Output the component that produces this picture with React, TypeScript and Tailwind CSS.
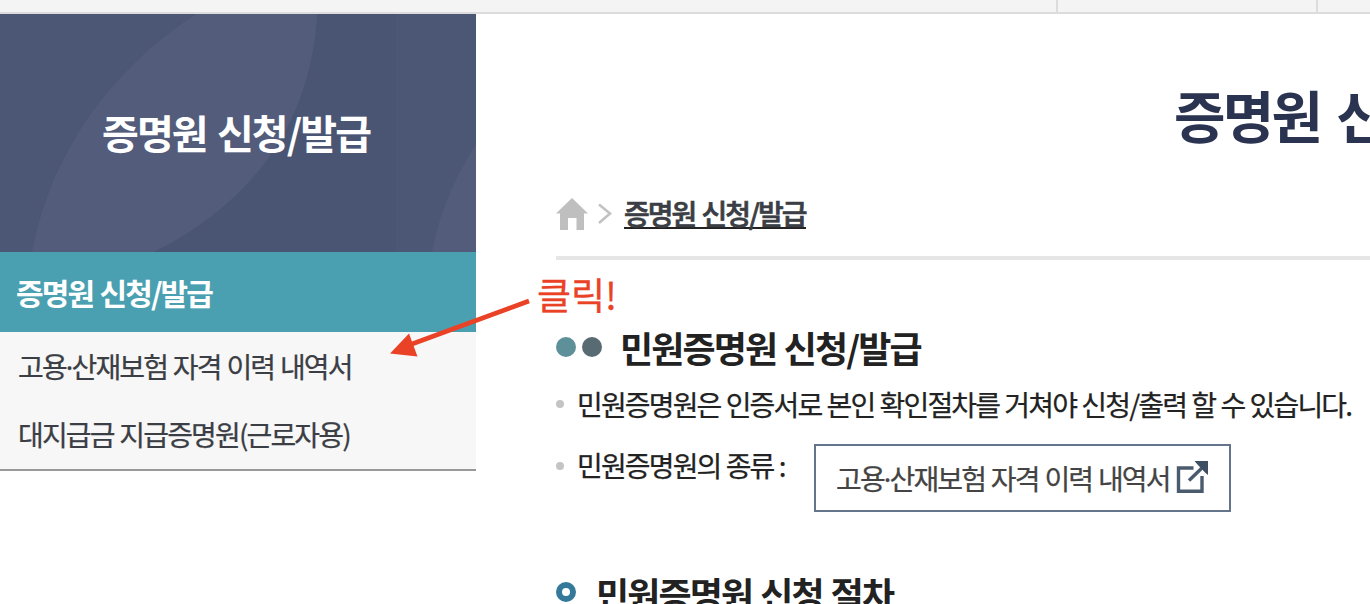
import React from "react";

function HomeIcon() {
  return (
    <svg width="32" height="32" viewBox="0 0 32 32" className="block">
      <path d="M16 0 L32 15.5 H28 V32 H20.5 V20 H12 V32 H4 V15.5 H0 Z" fill="#bfbfbf" />
    </svg>
  );
}

function ExternalIcon() {
  return (
    <svg width="34" height="34" viewBox="0 0 34 34" className="mt-[-2px] block shrink-0">
      <path d="M17.5 8 H2.5 V31.2 H26 V16" fill="none" stroke="#4b5b6e" strokeWidth="3.4" />
      <path d="M13 20.5 L28 6" fill="none" stroke="#4b5b6e" strokeWidth="3.4" />
      <path d="M18.5 1 H32 V15 L29 12.5 L21.5 4.5 Z" fill="#3e4f63" />
    </svg>
  );
}

function InsuranceLabel() {
  return (
    <>
      고용<span className="font-['Noto_Sans']">·</span>산재보험 자격 이력 내역서
    </>
  );
}

function Sidebar() {
  return (
    <aside className="w-[476px] shrink-0">
      <div className="relative h-[238px] overflow-hidden bg-[#4a5574]">
        <svg width="476" height="238" viewBox="0 0 476 238" className="absolute inset-0">
          <path d="M0 0 H196 C110 56 50 140 32 238 H0 Z" fill="#4c5776" />
          <path d="M196 0 H317 C312 100 260 185 154 238 H32 C50 140 110 56 196 0 Z" fill="#535c7a" />
          <path d="M396 0 H476 V238 H396 Z" fill="#4c5776" />
          <path d="M476 130 C454 165 439 200 432 238 H476 Z" fill="#535c7a" />
        </svg>
        <h2 className="relative pt-[88px] pl-[102px] text-[40px] leading-[60px] font-bold tracking-[-1.9px] [word-spacing:3px] text-white">
          증명원 신청/발급
        </h2>
      </div>
      <div className="h-[80px] bg-[#4aa0b1] pl-[16px] text-[30px] leading-[80px] font-bold tracking-[-1.9px] [word-spacing:1.5px] text-white">
        증명원 신청/발급
      </div>
      <ul className="h-[139px] border-b-2 border-[#999] bg-[#f7f7f7] pl-[18px] text-[28px] tracking-[-1.85px] [word-spacing:1.3px] text-[#3b3e44] [-webkit-text-stroke:0.25px_#3b3e44]">
        <li className="h-[68px] leading-[68px]"><InsuranceLabel /></li>
        <li className="h-[68px] leading-[68px]">대지급금 지급증명원(근로자용)</li>
      </ul>
    </aside>
  );
}

function Content() {
  return (
    <main className="w-[1600px] shrink-0 pl-[80px]">
      <h1 className="pt-[58px] pl-[618px] text-[56px] leading-[84px] font-bold tracking-[-2.8px] [word-spacing:6px] text-[#2a3350]">
        증명원 신청/발급
      </h1>
      <nav className="mt-[18px] flex h-[86px] items-start border-b-4 border-[#e6e6e6] pt-[24px]">
        <HomeIcon />
        <svg width="16" height="22" viewBox="0 0 16 22" className="mt-[5px] ml-[9px] block">
          <path d="M2 1.5 L13 10.5 L2 20" fill="none" stroke="#c2c2c2" strokeWidth="2.6" />
        </svg>
        <span className="mt-[-2px] ml-[11px] h-[33px] border-b-2 border-[#222] text-[28px] leading-[34px] font-medium tracking-[-2px] [word-spacing:2px] text-[#3b3e44] [-webkit-text-stroke:0.7px_#3b3e44]">
          증명원 신청/발급
        </span>
      </nav>
      <div className="mt-[63px] flex h-[50px] items-center">
        <span className="mb-[2px] h-5 w-5 rounded-full bg-[#5e9099]" />
        <span className="mb-[2px] ml-1.5 h-5 w-5 rounded-full bg-[#596b72]" />
        <h3 className="mb-[2px] ml-[18px] text-[36px] leading-[50px] font-bold tracking-[-1.9px] [word-spacing:1.5px] text-[#222]">
          민원증명원 신청/발급
        </h3>
      </div>
      <ul className="text-[28px] tracking-[-1.85px] text-[#222] [-webkit-text-stroke:0.25px]">
        <li className="flex h-[62px] items-center">
          <span className="mr-[13px] h-2 w-2 rounded-full bg-[#c4c4c4]" />
          <span className="leading-[60px] [word-spacing:0.8px]">민원증명원은 인증서로 본인 확인절차를 거쳐야 신청/출력 할 수 있습니다.</span>
        </li>
        <li className="flex h-[76px] items-start">
          <span className="mt-[27px] mr-[13px] h-2 w-2 rounded-full bg-[#c4c4c4]" />
          <span className="w-[237px] leading-[60px] [word-spacing:0.8px]">민원증명원의 종류 :</span>
          <a className="mt-[9px] flex h-[68px] w-[417px] items-center border-2 border-[#64748b] pl-[20px] [word-spacing:1.3px] text-[#444]">
            <span className="w-[340px] leading-[64px]"><InsuranceLabel /></span>
            <ExternalIcon />
          </a>
        </li>
      </ul>
      <div className="mt-[54px] flex h-[50px] items-center">
        <span className="mt-[4px] h-5 w-5 rounded-full border-[6px] border-[#34799a]" />
        <h3 className="mt-[5px] ml-[20px] text-[36px] leading-[50px] font-bold tracking-[-1.9px] [word-spacing:1.8px] text-[#222]">
          민원증명원 신청 절차
        </h3>
      </div>
    </main>
  );
}

export default function App() {
  return (
    <div className="relative h-[604px] w-[1370px] overflow-hidden bg-white font-['Noto_Sans_CJK_KR','Noto_Sans',sans-serif] whitespace-nowrap">
      <header className="flex h-[14px] border-b-2 border-[#dcdcdc] bg-[#f4f4f4]">
        <div className="w-[1056px] shrink-0" />
        <div className="w-[260px] shrink-0 border-l-2 border-[#dcdcdc]" />
        <div className="grow border-l-2 border-[#dcdcdc]" />
      </header>
      <div className="flex">
        <Sidebar />
        <Content />
      </div>
      <svg width="144" height="64" viewBox="0 0 144 64" className="absolute top-[295px] left-[388px]">
        <path d="M141 6 L24 49" stroke="#ea4226" strokeWidth="4.6" fill="none" />
        <path d="M2 58.5 L21 38.5 L29.5 61.5 Z" fill="#ea4226" />
      </svg>
      <span className="absolute top-[267px] left-[537px] text-[37px] leading-[54px] text-[#ea4226] [-webkit-text-stroke:0.3px]">클릭!</span>
    </div>
  );
}
